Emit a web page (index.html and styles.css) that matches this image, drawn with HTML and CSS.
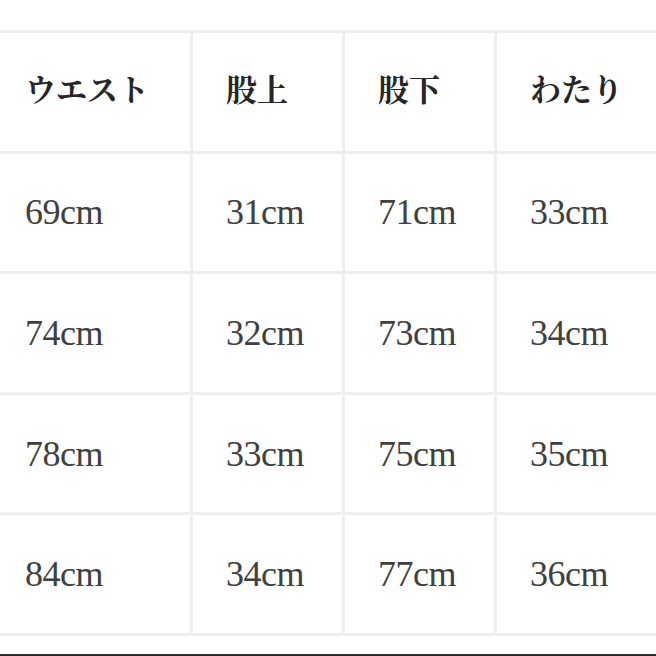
FILE: index.html
```html
<!DOCTYPE html>
<html lang="ja">
<head>
<meta charset="utf-8">
<link rel="stylesheet" href="styles.css">
</head>
<body>
<div class="page">
  <div class="table">
    <div class="cell head">ウエスト</div>
    <div class="cell head">股上</div>
    <div class="cell head">股下</div>
    <div class="cell head">わたり</div>

    <div class="cell">69cm</div>
    <div class="cell">31cm</div>
    <div class="cell">71cm</div>
    <div class="cell">33cm</div>

    <div class="cell">74cm</div>
    <div class="cell">32cm</div>
    <div class="cell">73cm</div>
    <div class="cell">34cm</div>

    <div class="cell">78cm</div>
    <div class="cell">33cm</div>
    <div class="cell">75cm</div>
    <div class="cell">35cm</div>

    <div class="cell">84cm</div>
    <div class="cell">34cm</div>
    <div class="cell">77cm</div>
    <div class="cell">36cm</div>
  </div>
  <div class="bar"></div>
</div>
</body>
</html>
```
FILE: styles.css
```css
html, body {
  margin: 0;
  padding: 0;
  background: #ffffff;
}
.page {
  width: 656px;
  height: 656px;
  overflow: hidden;
  padding-top: 30px;
  box-sizing: border-box;
  display: flex;
  flex-direction: column;
}
.table {
  display: grid;
  grid-template-columns: 198px 149px 149px 170px;
  grid-template-rows: repeat(5, 117.6px);
  gap: 3px;
  padding: 3px 0;
  margin-left: -8px;
  background: #eeeeee;
  width: max-content;
}
.cell {
  background: #ffffff;
  display: flex;
  align-items: center;
  padding-left: 33px;
  font-family: "Liberation Serif", "Times New Roman", serif;
  font-size: 36px;
  color: #404040;
  letter-spacing: -0.5px;
}
.cell.head {
  font-family: "Noto Serif CJK JP", "Noto Sans CJK JP", serif;
  font-weight: 700;
  font-size: 31px;
  color: #262626;
  letter-spacing: 0;
  padding-bottom: 8px;
}
.bar {
  height: 2px;
  margin-top: 18px;
  background: #2e2e2e;
}
```
